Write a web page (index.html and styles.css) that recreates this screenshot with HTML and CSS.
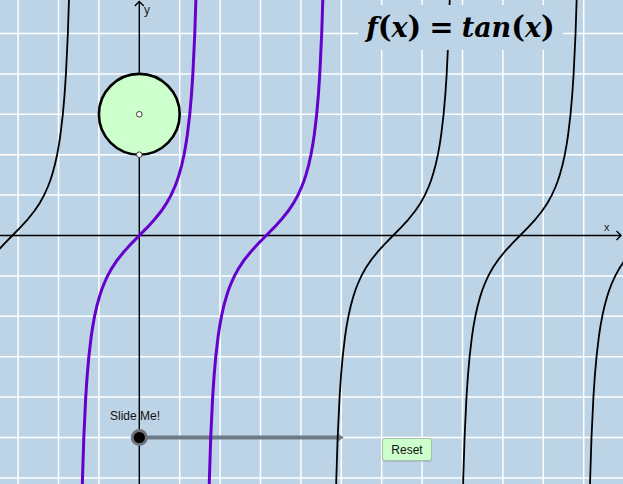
FILE: index.html
```html
<!DOCTYPE html>
<html>
<head>
<meta charset="utf-8">
<title>f(x) = tan(x)</title>
<link rel="stylesheet" href="styles.css">
</head>
<body>
<div class="canvas">
  <svg class="graph" width="623" height="484" viewBox="0 0 623 484" xmlns="http://www.w3.org/2000/svg">
    <defs>
      <path id="tb" d="M-57.73,282.8 L-56.79,242.4 -55.49,202 -53.56,161.6 -52.22,141.4 -50.46,121.2 -48.09,101 -46.57,90.9 -44.73,80.8 -42.49,70.7 -39.70,60.6 -37.71,54.5 -35.39,48.5 -31.73,40.4 -27.26,32.3 -21.83,24.2 -15.37,16.2 -7.98,8.1 0,0 7.98,-8.1 15.37,-16.2 21.83,-24.2 27.26,-32.3 31.73,-40.4 35.39,-48.5 37.71,-54.5 39.70,-60.6 42.49,-70.7 44.73,-80.8 46.57,-90.9 48.09,-101 50.46,-121.2 52.22,-141.4 53.56,-161.6 55.49,-202 56.79,-242.4 57.73,-282.8"/>
    </defs>
    <g class="grid">
      <line x1="18.1" y1="0" x2="18.1" y2="484"/>
      <line x1="58.5" y1="0" x2="58.5" y2="484"/>
      <line x1="98.9" y1="0" x2="98.9" y2="484"/>
      <line x1="179.7" y1="0" x2="179.7" y2="484"/>
      <line x1="220.1" y1="0" x2="220.1" y2="484"/>
      <line x1="260.5" y1="0" x2="260.5" y2="484"/>
      <line x1="300.9" y1="0" x2="300.9" y2="484"/>
      <line x1="341.3" y1="0" x2="341.3" y2="484"/>
      <line x1="381.7" y1="0" x2="381.7" y2="484"/>
      <line x1="422.1" y1="0" x2="422.1" y2="484"/>
      <line x1="462.5" y1="0" x2="462.5" y2="484"/>
      <line x1="502.9" y1="0" x2="502.9" y2="484"/>
      <line x1="543.3" y1="0" x2="543.3" y2="484"/>
      <line x1="583.7" y1="0" x2="583.7" y2="484"/>
      <line x1="0" y1="33.5" x2="623" y2="33.5"/>
      <line x1="0" y1="73.9" x2="623" y2="73.9"/>
      <line x1="0" y1="114.3" x2="623" y2="114.3"/>
      <line x1="0" y1="154.7" x2="623" y2="154.7"/>
      <line x1="0" y1="195.1" x2="623" y2="195.1"/>
      <line x1="0" y1="275.9" x2="623" y2="275.9"/>
      <line x1="0" y1="316.3" x2="623" y2="316.3"/>
      <line x1="0" y1="356.7" x2="623" y2="356.7"/>
      <line x1="0" y1="397.1" x2="623" y2="397.1"/>
      <line x1="0" y1="437.5" x2="623" y2="437.5"/>
      <line x1="0" y1="477.9" x2="623" y2="477.9"/>
    </g>
    <g class="slider">
      <line class="slider-track" x1="139.3" y1="437.5" x2="339" y2="437.5"/>
      <polygon class="slider-tip" points="338,433.8 343.8,437.5 338,441.2"/>
    </g>
    <g class="axes">
      <line x1="0" y1="235.5" x2="621" y2="235.5"/>
      <polyline points="616.5,231 621,235.5 616.5,240"/>
      <line x1="139.3" y1="1.5" x2="139.3" y2="484"/>
      <polyline points="134.8,6 139.3,1.5 143.8,6"/>
    </g>
    <use href="#tb" x="12.38" y="235.5" class="curve-black"/>
    <use href="#tb" x="393.14" y="235.5" class="curve-black"/>
    <use href="#tb" x="520.06" y="235.5" class="curve-black"/>
    <use href="#tb" x="646.98" y="235.5" class="curve-black"/>
    <use href="#tb" x="139.3" y="235.5" class="curve-purple"/>
    <use href="#tb" x="266.22" y="235.5" class="curve-purple"/>
    <circle class="disk" cx="139.3" cy="114.3" r="40.4"/>
    <circle class="pt" cx="139.3" cy="114.3" r="2.8"/>
    <circle class="pt" cx="139.3" cy="154.7" r="2.8"/>
    <circle class="knob-halo" cx="139.3" cy="437.5" r="8.5"/>
    <circle class="knob" cx="139.3" cy="437.5" r="5.6"/>
  </svg>
  <div class="title"><span class="it">f</span><span class="up">(</span><span class="it">x</span><span class="up">)</span><span class="up eq">=</span><span class="it">tan</span><span class="up">(</span><span class="it">x</span><span class="up">)</span></div>
  <div class="lbl lbl-y">y</div>
  <div class="lbl lbl-x">x</div>
  <div class="slider-cap">Slide Me!</div>
  <button class="reset" type="button">Reset</button>
</div>
</body>
</html>
```

FILE: styles.css
```css
html, body {
  margin: 0;
  padding: 0;
}

body {
  background: #bdd4e6;
  font-family: "Liberation Sans", Arial, sans-serif;
}

.canvas {
  position: relative;
  width: 623px;
  height: 484px;
  overflow: hidden;
  background: #bdd4e6;
}

.graph {
  position: absolute;
  left: 0;
  top: 0;
  display: block;
}

.grid line {
  stroke: #ffffff;
  stroke-width: 1.5;
}

.axes line,
.axes polyline {
  stroke: #000000;
  stroke-width: 1.4;
  fill: none;
}

.slider-track {
  stroke: #6c7b86;
  stroke-width: 4;
}

.slider-tip {
  fill: #6c7b86;
}

.curve-black {
  fill: none;
  stroke: #000000;
  stroke-width: 1.8;
  stroke-linejoin: round;
}

.curve-purple {
  fill: none;
  stroke: #6600cc;
  stroke-width: 3;
  stroke-linejoin: round;
}

.disk {
  fill: #ccffcc;
  stroke: #000000;
  stroke-width: 2.6;
}

.pt {
  fill: #ffffff;
  stroke: #333333;
  stroke-width: 1;
}

.knob-halo {
  fill: #6f7378;
}

.knob {
  fill: #000000;
}

.title {
  position: absolute;
  left: 358px;
  top: 5px;
  width: 205px;
  height: 45px;
  background: #bdd4e6;
  display: flex;
  align-items: center;
  justify-content: center;
  font-family: "DejaVu Serif", "Liberation Serif", serif;
  font-weight: bold;
  font-size: 27px;
  color: #000000;
  line-height: 1;
}

.title .it {
  font-style: italic;
}

.title .up {
  font-style: normal;
  font-size: 29px;
}

.title .eq {
  margin: 0 8px;
}

.lbl {
  position: absolute;
  font-size: 12px;
  line-height: 14px;
  color: #222222;
}

.lbl-y {
  left: 144px;
  top: 3px;
}

.lbl-x {
  left: 604px;
  top: 220px;
  font-size: 11px;
}

.slider-cap {
  position: absolute;
  left: 110px;
  top: 409px;
  font-size: 12px;
  line-height: 14px;
  color: #111111;
}

.reset {
  position: absolute;
  left: 382px;
  top: 438px;
  width: 50px;
  height: 23px;
  margin: 0;
  padding: 0;
  border: 1px solid #a9bfa9;
  border-radius: 3px;
  background: #ccffcc;
  font-family: "Liberation Sans", Arial, sans-serif;
  font-size: 12px;
  color: #111111;
  box-shadow: 0 1px 1px rgba(0, 0, 0, 0.12);
}
```
